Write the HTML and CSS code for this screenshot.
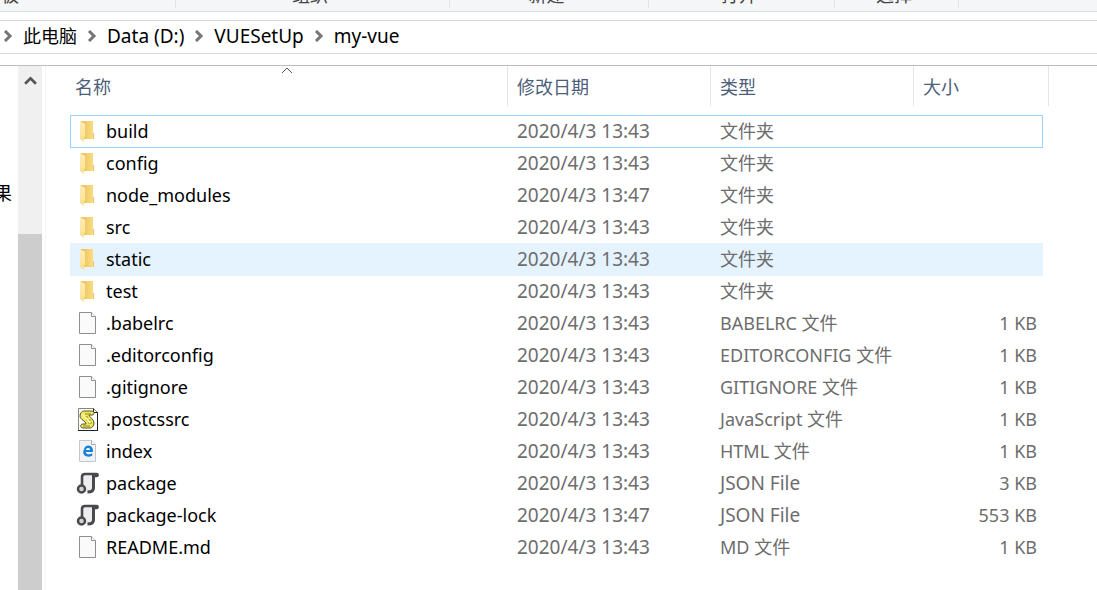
FILE: index.html
```html
<!DOCTYPE html>
<html lang="zh-CN">
<head>
    <meta charset="UTF-8">
    <title>my-vue</title>
    <link rel="stylesheet" href="styles.css">
</head>
<body>
    <svg class="sprite" aria-hidden="true">
        <defs>
            <linearGradient id="folderBack" x1="0" y1="0" x2="1" y2="0">
                <stop offset="0" stop-color="#e9bf58"/>
                <stop offset="1" stop-color="#fddf86"/>
            </linearGradient>
            <linearGradient id="folderFront" x1="0" y1="0" x2="0" y2="1">
                <stop offset="0" stop-color="#ffeebb"/>
                <stop offset="1" stop-color="#fbdf8d"/>
            </linearGradient>
        </defs>
        <symbol id="folder" viewBox="0 0 24 24">
            <path d="M5 2h12v12h1v6H8z" fill="url(#folderBack)"/>
            <path d="M17 14h1v6h-1z" fill="#eec763"/>
            <path d="M4 2l5 3v13H8v5l-4-3z" fill="url(#folderFront)"/>
        </symbol>
        <symbol id="file" viewBox="0 0 24 24">
            <path d="M3.5 1.5h12l4 4v17h-16z" fill="#fafafa" stroke="#8f8f8f"/>
            <path d="M15.5 1.5v4h4" fill="#fff" stroke="#8f8f8f"/>
        </symbol>
        <symbol id="script" viewBox="0 0 24 24">
            <path d="M2.5 1.5h15l4 4v18h-19z" fill="#fff" stroke="#85857a"/>
            <path d="M2 23.5h20M21.5 5v18M17.5 1.5v4h4" fill="none" stroke="#222"/>
            <path d="M8 4h7c3 0 4 2 2 4h-4c0 2 5 4 5 8 0 3-2 5-4 5H7c-3 0-3-4 0-4h3c0-3-6-4-6-8 0-3 2-5 4-5z" fill="#f0e75a" stroke="#57542c"/>
            <path d="M9 7h6M8 10h4M10 13h5M12 16h4M7 19h7" stroke="#8d873a" fill="none"/>
            <path d="M7 7c0 4 6 5 7 9" stroke="#fffcae" stroke-width="1.5" fill="none"/>
        </symbol>
        <symbol id="html" viewBox="0 0 24 24">
            <path d="M3.5 1.5h12l4 4v17h-16z" fill="#f1f3f5" stroke="#c3c7ca"/>
            <path d="M15.5 1.5v4h4" fill="#fff" stroke="#a9adb0"/>
            <path d="M7.500 11c1-6 9-6.500 9.500.5v1.500H9.800c.2 2.500 4 3 6.400 1.300v2.400c-4 2-9 .8-9-3.700 0-1.500.8-2.800 2-3.500-1 .3-1.500.9-1.700 1.500zM9.900 11h4.300c-.1-2.600-4-2.600-4.300 0z" fill="#1683d8" fill-rule="evenodd"/>
        </symbol>
        <symbol id="json" viewBox="0 0 24 24">
            <path d="M6 3h12v16l-4 2H7z" fill="#ededf0"/>
            <path d="M6 15V6c0-2 1-3 3-3h11.500c1.500 0 1.500 2 0 2H18" fill="none" stroke="#48494b" stroke-width="2.600"/>
            <path d="M17.500 4v13c0 3-2 4-6 4" fill="none" stroke="#48494b" stroke-width="3"/>
            <circle cx="5.500" cy="18" r="3.500" fill="#d2d3d4" stroke="#48494b" stroke-width="2.500"/>
        </symbol>
        <symbol id="chevron" viewBox="0 0 10 12">
            <path d="M2 1l5 5-5 5" fill="none" stroke="#767676" stroke-width="3"/>
        </symbol>
    </svg>

    <div class="ribbon">
        <div class="group group-clipboard"><span>板</span></div>
        <div class="group group-organize"><span>组织</span></div>
        <div class="group group-new"><span>新建</span></div>
        <div class="group group-open"><span>打开</span></div>
        <div class="group group-select"><span>选择</span></div>
    </div>

    <nav class="address">
        <svg class="chevron"><use href="#chevron"/></svg>
        <a href="#">此电脑</a>
        <svg class="chevron"><use href="#chevron"/></svg>
        <a href="#" class="latin">Data (D:)</a>
        <svg class="chevron"><use href="#chevron"/></svg>
        <a href="#" class="latin">VUESetUp</a>
        <svg class="chevron"><use href="#chevron"/></svg>
        <a href="#" class="latin">my-vue</a>
    </nav>

    <div class="content">
        <aside class="tree"><a href="#">果</a></aside>
        <div class="scrollbar">
            <button type="button" class="scroll-up" aria-label="向上滚动">
                <svg viewBox="0 0 12 10"><path d="M1 8l5-5 5 5" fill="none" stroke="#555" stroke-width="2.500"/></svg>
            </button>
            <div class="thumb"></div>
        </div>

        <main class="list">
            <table>
                <colgroup>
                    <col>
                    <col class="col-date">
                    <col class="col-type">
                    <col class="col-size">
                    <col class="col-end">
                </colgroup>
                <thead>
                    <tr>
                        <th class="sorted">
                            <button type="button">名称</button>
                            <svg class="sort" viewBox="0 0 12 7"><path d="M1 6l5-5 5 5" fill="none" stroke="#555"/></svg>
                        </th>
                        <th><button type="button">修改日期</button></th>
                        <th><button type="button">类型</button></th>
                        <th colspan="2"><button type="button">大小</button></th>
                    </tr>
                </thead>
                <tbody>
                    <tr class="focused">
                        <td><div class="name"><svg><use href="#folder"/></svg>build</div></td>
                        <td class="latin">2020/4/3 13:43</td>
                        <td>文件夹</td>
                        <td></td>
                    </tr>
                    <tr>
                        <td><div class="name"><svg><use href="#folder"/></svg>config</div></td>
                        <td class="latin">2020/4/3 13:43</td>
                        <td>文件夹</td>
                        <td></td>
                    </tr>
                    <tr>
                        <td><div class="name"><svg><use href="#folder"/></svg>node_modules</div></td>
                        <td class="latin">2020/4/3 13:47</td>
                        <td>文件夹</td>
                        <td></td>
                    </tr>
                    <tr>
                        <td><div class="name"><svg><use href="#folder"/></svg>src</div></td>
                        <td class="latin">2020/4/3 13:43</td>
                        <td>文件夹</td>
                        <td></td>
                    </tr>
                    <tr class="hovered">
                        <td><div class="name"><svg><use href="#folder"/></svg>static</div></td>
                        <td class="latin">2020/4/3 13:43</td>
                        <td>文件夹</td>
                        <td></td>
                    </tr>
                    <tr>
                        <td><div class="name"><svg><use href="#folder"/></svg>test</div></td>
                        <td class="latin">2020/4/3 13:43</td>
                        <td>文件夹</td>
                        <td></td>
                    </tr>
                    <tr>
                        <td><div class="name"><svg><use href="#file"/></svg>.babelrc</div></td>
                        <td class="latin">2020/4/3 13:43</td>
                        <td>BABELRC 文件</td>
                        <td class="size">1 KB</td>
                    </tr>
                    <tr>
                        <td><div class="name"><svg><use href="#file"/></svg>.editorconfig</div></td>
                        <td class="latin">2020/4/3 13:43</td>
                        <td>EDITORCONFIG 文件</td>
                        <td class="size">1 KB</td>
                    </tr>
                    <tr>
                        <td><div class="name"><svg><use href="#file"/></svg>.gitignore</div></td>
                        <td class="latin">2020/4/3 13:43</td>
                        <td>GITIGNORE 文件</td>
                        <td class="size">1 KB</td>
                    </tr>
                    <tr>
                        <td><div class="name"><svg><use href="#script"/></svg>.postcssrc</div></td>
                        <td class="latin">2020/4/3 13:43</td>
                        <td>JavaScript 文件</td>
                        <td class="size">1 KB</td>
                    </tr>
                    <tr>
                        <td><div class="name"><svg><use href="#html"/></svg>index</div></td>
                        <td class="latin">2020/4/3 13:43</td>
                        <td>HTML 文件</td>
                        <td class="size">1 KB</td>
                    </tr>
                    <tr>
                        <td><div class="name"><svg><use href="#json"/></svg>package</div></td>
                        <td class="latin">2020/4/3 13:43</td>
                        <td class="latin">JSON File</td>
                        <td class="size">3 KB</td>
                    </tr>
                    <tr>
                        <td><div class="name"><svg><use href="#json"/></svg>package-lock</div></td>
                        <td class="latin">2020/4/3 13:47</td>
                        <td class="latin">JSON File</td>
                        <td class="size">553 KB</td>
                    </tr>
                    <tr>
                        <td><div class="name"><svg><use href="#file"/></svg>README.md</div></td>
                        <td class="latin">2020/4/3 13:43</td>
                        <td>MD 文件</td>
                        <td class="size">1 KB</td>
                    </tr>
                </tbody>
            </table>
        </main>
    </div>
</body>
</html>
```

FILE: styles.css
```css
* {
    box-sizing: border-box;
}

body {
    display: flex;
    flex-direction: column;
    height: 100vh;
    margin: 0;
    overflow: hidden;
    background-color: #fff;
    color: #000;
    font-family: "Noto Sans", "Noto Sans CJK SC", sans-serif;
    font-size: 18px;
    line-height: 24px;
}

a {
    color: inherit;
    text-decoration: none;
}

button {
    padding: 0;
    border: 0;
    background: none;
    color: inherit;
    font: inherit;
}

.sprite {
    position: absolute;
    width: 0;
    height: 0;
}

/* Latin letters and digits run small beside the Chinese text */
.latin {
    font-size: 19px;
}

/* Ribbon, only the bottom edge is on screen */
.ribbon {
    display: flex;
    flex: none;
    height: 12px;
    padding-bottom: 3px;
    border-bottom: 1px solid #dadbdc;
    background-color: #f5f6f7;
    color: #444;
}

.group {
    display: flex;
    align-items: flex-end;
    justify-content: center;
    height: 8px;
    padding: 0 5px 1px 0;
    overflow: hidden;
    border-right: 1px solid #e2e3e4;
}

.group-clipboard {
    justify-content: flex-start;
    width: 176px;
    padding-left: 1px;
}

.group-organize {
    width: 274px;
}

.group-new {
    width: 199px;
}

.group-open {
    width: 186px;
}

.group-select {
    width: 124px;
}

/* Address bar */
.address {
    display: flex;
    flex: none;
    align-items: center;
    gap: 10px;
    height: 34px;
    margin: 8px 0 11px;
    padding: 0 0 2px 3px;
    border-top: 1px solid #d9d9d9;
    border-bottom: 1px solid #d9d9d9;
}

.chevron {
    width: 10px;
    height: 12px;
}

.content {
    display: flex;
    flex: 1;
    min-height: 0;
    border-top: 1px solid #bcbcbc;
}

.tree {
    display: flex;
    justify-content: flex-end;
    width: 18px;
    padding: 115px 6px 0 0;
    overflow: hidden;
}

.scrollbar {
    display: flex;
    flex-direction: column;
    gap: 140px;
    width: 24px;
    background-color: #f0f0f0;
}

.scroll-up {
    height: 28px;
    padding-bottom: 2px;
}

.scroll-up svg {
    width: 13px;
    height: 11px;
}

.thumb {
    flex: 1;
    background-color: #cdcdcd;
}

/* File list */
.list {
    flex: 1;
    margin-left: 3px;
    padding: 0 48px 0 24px;
    border-left: 1px solid #f5f5f5;
}

table {
    width: 100%;
    table-layout: fixed;
    border-spacing: 0;
}

.col-date,
.col-type {
    width: 203px;
}

.col-size {
    width: 129px;
}

.col-end {
    width: 6px;
}

th {
    height: 40px;
    padding: 2px 9px 0;
    border-right: 1px solid #e5e5e5;
    color: #4c607a;
    font-weight: normal;
    text-align: left;
}

.sorted {
    position: relative;
    padding-left: 5px;
}

.sort {
    position: absolute;
    top: 1px;
    left: calc(50% - 8px);
    width: 12px;
    height: 7px;
}

tbody::before {
    display: block;
    height: 9px;
    content: "";
}

td {
    height: 32px;
    padding: 0 0 0 9px;
    color: #6d6d6d;
    white-space: nowrap;
}

td:first-child {
    padding-left: 6px;
    color: #000;
}

.name {
    display: flex;
    align-items: center;
    gap: 6px;
}

.name svg {
    width: 24px;
    height: 24px;
}

td.size {
    padding-right: 6px;
    text-align: right;
}

/* The marked rows reach one pixel into the next row */
.focused td {
    box-shadow: inset 0 1px #99d1ff, 0 1px #99d1ff;
}

.focused td:first-child {
    box-shadow: inset 1px 1px #99d1ff, 0 1px #99d1ff;
}

.focused td:last-child {
    box-shadow: inset -1px 1px #99d1ff, 0 1px #99d1ff;
}

.hovered td {
    background-color: #e5f3ff;
    box-shadow: 0 1px #e5f3ff;
}
```
